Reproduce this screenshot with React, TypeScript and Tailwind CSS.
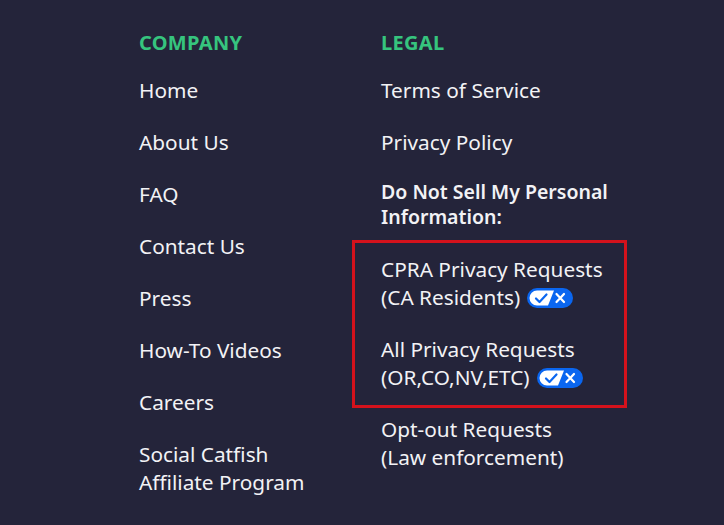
import React from "react";

function PrivacyToggle() {
  return (
    <svg width="46" height="20" viewBox="0 0 46 20" className="inline-block align-middle ml-[7px] -mt-[3px]">
      <rect x="0" y="0" width="46" height="20" rx="10" fill="#0a66f0" />
      <path d="M10 2.5 H27 L21 17.5 H10 A7.5 7.5 0 0 1 10 2.5 Z" fill="#ffffff" />
      <path d="M9 10.5 L12.5 14 L19.5 6.5" stroke="#0a66f0" strokeWidth="2.2" fill="none" strokeLinecap="round" strokeLinejoin="round" />
      <path d="M29.5 6 L37 14 M37 6 L29.5 14" stroke="#ffffff" strokeWidth="2.2" strokeLinecap="round" />
    </svg>
  );
}

const company = ["Home", "About Us", "FAQ", "Contact Us", "Press", "How-To Videos", "Careers"];

export default function App() {
  return (
    <div
      className="w-[724px] h-[525px] bg-[#24243a] text-[#f2f2f5] overflow-hidden"
      style={{ fontFamily: '"Noto Sans", "Open Sans", sans-serif' }}
    >
      <div className="flex pl-[139px] pt-[29px]">
        <div className="w-[242px] flex flex-col">
          <div className="text-[20px] leading-[28px] font-bold text-[#36c47e] tracking-[0.3px]">COMPANY</div>
          <div className="flex flex-col gap-[24px] mt-[19px]">
            {company.map((c) => (
              <div key={c} className="text-[20.8px] leading-[28px]">{c}</div>
            ))}
            <div className="text-[20.8px] leading-[28px]">
              Social Catfish
              <br />
              Affiliate Program
            </div>
          </div>
        </div>
        <div className="flex flex-col">
          <div className="text-[20px] leading-[28px] font-bold text-[#36c47e] tracking-[0.3px]">LEGAL</div>
          <div className="flex flex-col mt-[19px]">
            <div className="text-[20.8px] leading-[28px]">Terms of Service</div>
            <div className="text-[20.8px] leading-[28px] mt-[24px]">Privacy Policy</div>
            <div className="text-[19.5px] leading-[25px] font-semibold mt-[23px]">
              Do Not Sell My Personal
              <br />
              Information:
            </div>
            <div className="ml-[-29px] mt-[11px] w-[275px] border-[3px] border-[#d4121c] pl-[26px] pt-[12px] pb-[14px] flex flex-col gap-[24px]">
              <div className="text-[20.8px] leading-[28px]">
                CPRA Privacy Requests
                <br />
                (CA Residents)
                <PrivacyToggle />
              </div>
              <div className="text-[20.8px] leading-[28px]">
                All Privacy Requests
                <br />
                (OR,CO,NV,ETC)
                <PrivacyToggle />
              </div>
            </div>
            <div className="text-[20.8px] leading-[28px] mt-[7px]">
              Opt-out Requests
              <br />
              (Law enforcement)
            </div>
          </div>
        </div>
      </div>
    </div>
  );
}
